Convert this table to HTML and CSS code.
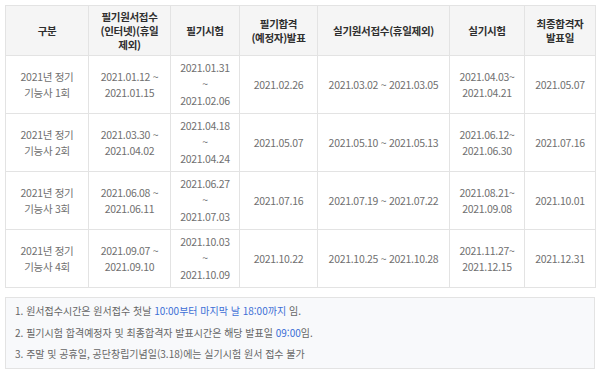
FILE: index.html
```html
<!DOCTYPE html>
<html lang="ko">
<head>
<meta charset="utf-8">
<link rel="stylesheet" href="styles.css">
</head>
<body>
<div class="wrap">
<table class="sched">
<colgroup>
<col class="c1"><col class="c2"><col class="c3"><col class="c4"><col class="c5"><col class="c6"><col class="c7">
</colgroup>
<thead>
<tr>
<th>구분</th>
<th>필기원서접수<br>(인터넷)(휴일<br>제외)</th>
<th>필기시험</th>
<th>필기합격<br>(예정자)발표</th>
<th>실기원서접수(휴일제외)</th>
<th>실기시험</th>
<th>최종합격자<br>발표일</th>
</tr>
</thead>
<tbody>
<tr>
<td>2021년 정기<br>기능사 1회</td>
<td>2021.01.12 ~<br>2021.01.15</td>
<td class="tall">2021.01.31<br>~<br>2021.02.06</td>
<td>2021.02.26</td>
<td>2021.03.02 ~ 2021.03.05</td>
<td>2021.04.03~<br>2021.04.21</td>
<td>2021.05.07</td>
</tr>
<tr>
<td>2021년 정기<br>기능사 2회</td>
<td>2021.03.30 ~<br>2021.04.02</td>
<td class="tall">2021.04.18<br>~<br>2021.04.24</td>
<td>2021.05.07</td>
<td>2021.05.10 ~ 2021.05.13</td>
<td>2021.06.12~<br>2021.06.30</td>
<td>2021.07.16</td>
</tr>
<tr>
<td>2021년 정기<br>기능사 3회</td>
<td>2021.06.08 ~<br>2021.06.11</td>
<td class="tall">2021.06.27<br>~<br>2021.07.03</td>
<td>2021.07.16</td>
<td>2021.07.19 ~ 2021.07.22</td>
<td>2021.08.21~<br>2021.09.08</td>
<td>2021.10.01</td>
</tr>
<tr>
<td>2021년 정기<br>기능사 4회</td>
<td>2021.09.07 ~<br>2021.09.10</td>
<td class="tall">2021.10.03<br>~<br>2021.10.09</td>
<td>2021.10.22</td>
<td>2021.10.25 ~ 2021.10.28</td>
<td>2021.11.27~<br>2021.12.15</td>
<td>2021.12.31</td>
</tr>
</tbody>
</table>
<ul class="notes">
<li>1. 원서접수시간은 원서접수 첫날 <span class="hl">10:00부터 마지막 날 18:00까지</span> 임.</li>
<li>2. 필기시험 합격예정자 및 최종합격자 발표시간은 해당 발표일 <span class="hl">09:00</span>임.</li>
<li>3. 주말 및 공휴일, 공단창립기념일(3.18)에는 실기시험 원서 접수 불가</li>
</ul>
</div>
</body>
</html>
```

FILE: styles.css
```css
html, body {
  margin: 0;
  padding: 0;
  background: #fff;
}
body {
  font-family: "Noto Sans CJK KR", "Noto Sans", sans-serif;
  font-size: 10.5px;
}
.wrap {
  padding: 5px 5px 0 5px;
  width: 590px;
}
.sched {
  width: 590px;
  border-collapse: collapse;
  table-layout: fixed;
}
.c1 { width: 83px; }
.c2 { width: 82px; }
.c3 { width: 69px; }
.c4 { width: 78px; }
.c5 { width: 132px; }
.c6 { width: 75px; }
.c7 { width: 71px; }
.sched th,
.sched td {
  border: 1px solid #e3e3e3;
  text-align: center;
  vertical-align: middle;
  padding: 0 2px;
}
.sched th {
  background: #f5f5f5;
  color: #2e2e2e;
  font-weight: bold;
  font-size: 10.5px;
  line-height: 14px;
  height: 49px;
  letter-spacing: -0.3px;
}
.sched td {
  color: #707070;
  line-height: 15.5px;
  height: 57px;
  letter-spacing: -0.3px;
}
.sched td.tall {
  line-height: 16.5px;
}
.notes {
  list-style: none;
  margin: 9px 0 0 0;
  padding: 2px 9px 3px 9px;
  background: #f8f9fb;
  border: 1px solid #e3e3e3;
  color: #666;
  font-size: 10px;
  line-height: 21.5px;
}
.hl {
  color: #3d6fd6;
}
```
